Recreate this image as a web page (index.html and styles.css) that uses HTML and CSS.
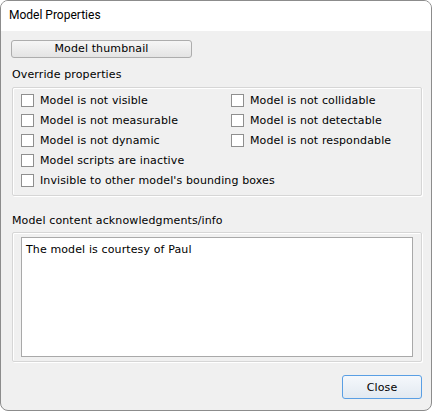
FILE: index.html
```html
<!DOCTYPE html>
<html>
<head>
<meta charset="utf-8">
<link rel="stylesheet" href="styles.css">
</head>
<body>
<div class="window">
  <div class="titlebar">Model Properties</div>
  <div class="content">
    <button class="btn thumb">Model thumbnail</button>
    <div class="label first">Override properties</div>
    <div class="group props">
      <label class="cb"><span class="box"></span>Model is not visible</label>
      <label class="cb"><span class="box"></span>Model is not collidable</label>
      <label class="cb"><span class="box"></span>Model is not measurable</label>
      <label class="cb"><span class="box"></span>Model is not detectable</label>
      <label class="cb"><span class="box"></span>Model is not dynamic</label>
      <label class="cb"><span class="box"></span>Model is not respondable</label>
      <label class="cb wide"><span class="box"></span>Model scripts are inactive</label>
      <label class="cb wide"><span class="box"></span>Invisible to other model's bounding boxes</label>
    </div>
    <div class="label second">Model content acknowledgments/info</div>
    <div class="group info">
      <div class="textarea">The model is courtesy of Paul</div>
    </div>
    <div class="footer">
      <button class="btn close">Close</button>
    </div>
  </div>
</div>
</body>
</html>
```
FILE: styles.css
```css
* { box-sizing: border-box; }
html, body { margin: 0; padding: 0; background: #ffffff; }
.window {
  width: 432px;
  height: 411px;
  border: 1px solid #8c8c8c;
  border-radius: 8px;
  overflow: hidden;
  background: #f0f0f0;
  display: flex;
  flex-direction: column;
  font-family: "DejaVu Sans", Verdana, sans-serif;
  font-size: 11px;
  letter-spacing: 0.12px;
  color: #000;
}
.titlebar {
  height: 30px;
  background: #ffffff;
  padding-left: 8px;
  padding-top: 6px;
  font-family: Roboto, "Segoe UI", sans-serif;
  font-size: 12px;
  letter-spacing: 0;
  line-height: 17px;
}
.content {
  display: flex;
  flex-direction: column;
  padding: 9px 9px 0 10px;
}
.btn {
  font-family: "DejaVu Sans", Verdana, sans-serif;
  font-size: 11px;
  letter-spacing: 0.12px;
  color: #000;
  padding: 0;
  margin: 0;
  border-radius: 3px;
}
.thumb {
  width: 181px;
  height: 18px;
  border: 1px solid #adadad;
  background: linear-gradient(#f6f6f6, #e4e4e4);
  line-height: 14px;
}
.label { line-height: 13px; padding-left: 1px; }
.label.first { margin-top: 10px; }
.label.second { margin-top: 18px; }
.group {
  border: 1px solid #d6d6d6;
  box-shadow: inset 1px 1px 0 #ffffff, 1px 1px 0 #ffffff;
  border-radius: 2px;
  margin-left: 1px;
  width: 410px;
}
.props {
  margin-top: 6px;
  display: grid;
  grid-template-columns: 210px 1fr;
  padding: 2px 8px 4px 8px;
  height: 109px;
}
.cb {
  display: flex;
  align-items: center;
  height: 20px;
  white-space: nowrap;
}
.cb.wide { grid-column: 1 / span 2; }
.box {
  width: 13px;
  height: 13px;
  border: 1px solid #8f8f8f;
  background: #ffffff;
  margin-right: 6px;
  flex: none;
}
.info {
  margin-top: 5px;
  height: 130px;
  padding: 4px 8px 4px 8px;
}
.textarea {
  height: 120px;
  background: #ffffff;
  border: 1px solid #a9a9a9;
  padding: 5px 4px;
  line-height: 13px;
}
.footer {
  display: flex;
  justify-content: flex-end;
  margin-top: 13px;
}
.close {
  width: 80px;
  height: 24px;
  border: 1px solid #5a9fe4;
  background: linear-gradient(#f5f8fc, #e2e9f1);
}
```
